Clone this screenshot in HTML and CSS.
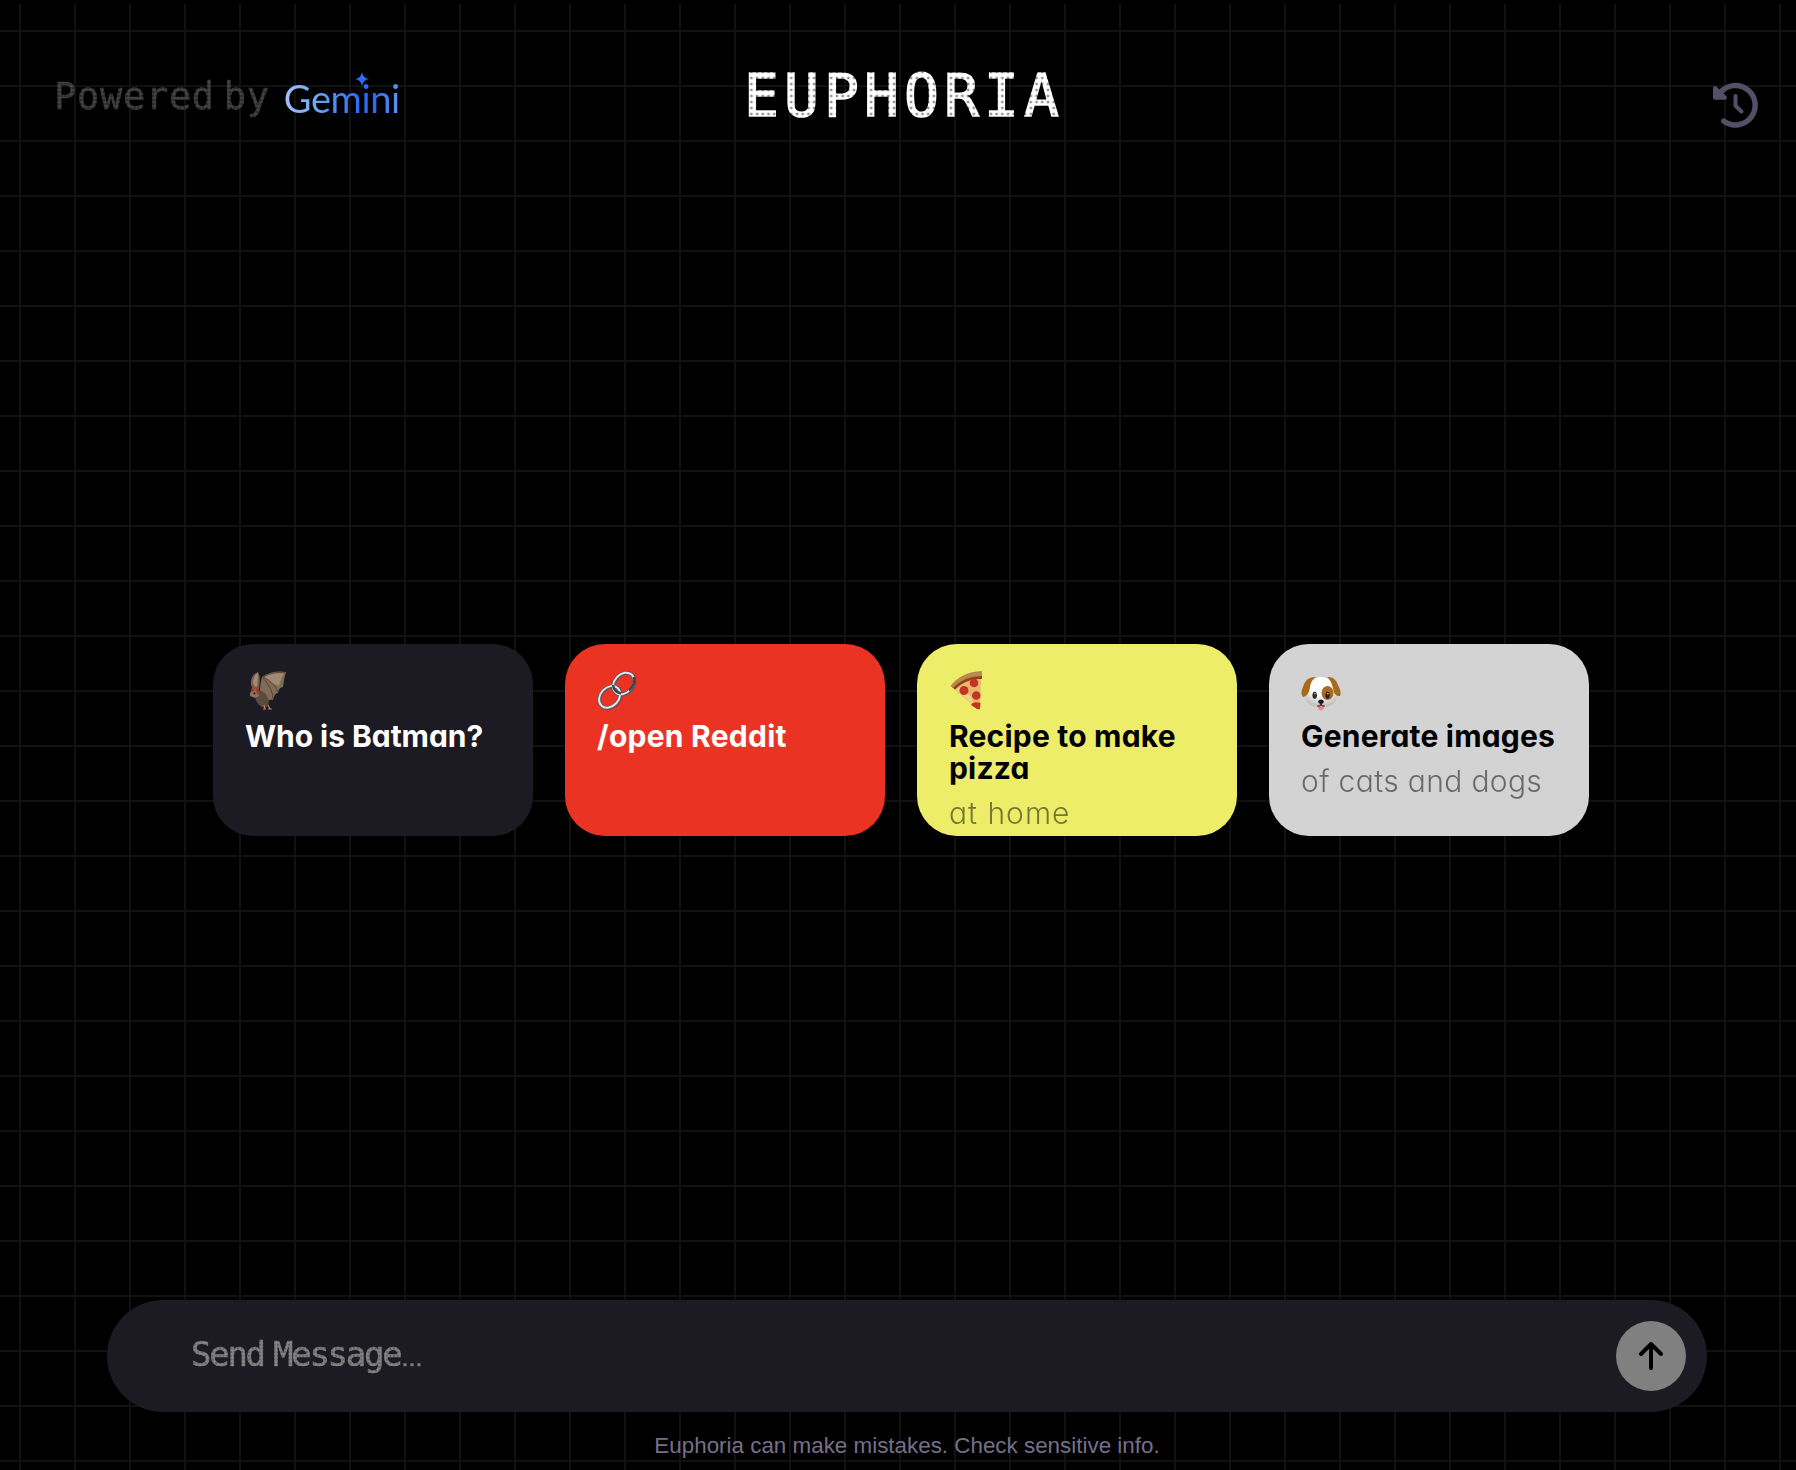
FILE: index.html
```html
<!DOCTYPE html>
<html lang="en">
<head>
<meta charset="utf-8">
<title>Euphoria</title>
<link rel="stylesheet" href="styles.css">
</head>
<body>
<div class="app">
  <header class="header">
    <div class="powered">
      <span class="powered-text">Powered by</span>
      <span class="gemini"><span class="gemini-word">Gemini</span><svg class="spark" viewBox="0 0 14 14"><path fill="#2f6bf2" d="M7 0Q8 6 14 7Q8 8 7 14Q6 8 0 7Q6 6 7 0Z"/></svg></span>
    </div>
    <h1 class="brand">EUPHORIA</h1>
    <button class="history" aria-label="History">
      <svg width="50" height="50" viewBox="0 0 50 50" fill="none" stroke="#534f66" stroke-linecap="round" stroke-linejoin="round">
        <path d="M13.7 41A19.7 19.7 0 1 0 10 13" stroke-width="5.4"/>
        <path d="M5 8V17.7H15Z" fill="#534f66" stroke-width="4"/>
        <path d="M25.5 16V25.7L31.5 31.5" stroke-width="4"/>
      </svg>
    </button>
  </header>

  <main class="cards">
    <article class="card card-dark">
      <svg class="emoji" viewBox="0 0 40 40">
        <path fill="#77614f" d="M6 14Q5 4 13 1Q16 6 14 18L10 22Z"/>
        <path fill="#a48a70" d="M8 13Q8 5 13 2Q13 8 12 17Z"/>
        <path fill="#806b57" d="M17 6Q28-1 41 1Q39 7 38 16Q34 16 33 22Q30 21 28 29Q24 28 18 33Q12 27 17 6Z"/>
        <path fill="#a08972" d="M18 6Q28 0 40 2Q36 6 34 15Q28 13 18 6Z"/>
        <path fill="none" stroke="#55402f" stroke-width=".9" d="M18 6Q29 11 33 21M18 7Q28 18 28 28M18 6Q29 0 40 2"/>
        <ellipse cx="17" cy="28" rx="6" ry="9" transform="rotate(-28 17 28)" fill="#5c4b3c"/>
        <path fill="#8d7057" d="M5 22Q8 16 13 20L14 25L10 27L5 25Z"/>
        <path fill="#a33d27" d="M6 21L7 15L10 20ZM11 20L12 14Q16 18 12 23Z"/>
        <circle cx="9.5" cy="22.5" r=".9" fill="#171210"/>
        <path fill="none" stroke="#b47f70" stroke-width="1.2" d="M19 34L20 38M18 38H21M23 34L25 38M23 38H27"/>
      </svg>
      <h2 class="title t-batman">Who is Batman?</h2>
    </article>
    <article class="card card-red">
      <svg class="emoji" viewBox="0 0 40 40" fill="none">
        <g stroke="#50565e" stroke-width="3.8">
          <ellipse cx="27" cy="12.8" rx="12" ry="9.2" transform="rotate(-48 27 12.8)"/>
          <ellipse cx="13" cy="26.2" rx="12" ry="9.2" transform="rotate(-48 13 26.2)"/>
        </g>
        <g stroke="#dfe5ea" stroke-width="2">
          <ellipse cx="26.6" cy="12.5" rx="12" ry="9.2" transform="rotate(-48 26.6 12.5)"/>
          <ellipse cx="12.6" cy="25.8" rx="12" ry="9.2" transform="rotate(-48 12.6 25.8)"/>
        </g>
        <path stroke="#3f4449" stroke-width="2.4" d="M37 6Q39 13 32 19.500M16 14Q17 21 24 22.500"/>
      </svg>
      <h2 class="title t-reddit">/open Reddit</h2>
    </article>
    <article class="card card-yellow">
      <svg class="emoji" viewBox="0 0 40 40">
        <path fill="#e9b86e" d="M5 18Q16 6 32 6L31 38Q29 40 25 35Z"/>
        <path fill="#f3d28c" d="M7 18Q10 22 25 34L22 26L12 16Z"/>
        <path fill="#8d431e" d="M3 16Q14 3 33 3V8Q17 7 6 18.500Z"/>
        <path fill="#b98a4b" d="M1.500 15Q12 1 33 0V5Q15 5 4 17Z"/>
        <g fill="#c53425"><circle cx="25" cy="12" r="4.300"/><circle cx="15" cy="19.500" r="4.500"/><circle cx="27.300" cy="24.500" r="4.300"/><path d="M22 34Q24 30 31.500 32L31 38Q29 39 25 36Z"/></g>
      </svg>
      <h2 class="title t-pizza">Recipe to make pizza</h2>
      <p class="sub s-home">at home</p>
    </article>
    <article class="card card-gray">
      <svg class="emoji" viewBox="0 0 40 40">
        <defs><radialGradient id="fur" cx=".5" cy=".3" r=".75"><stop offset=".4" stop-color="#fff"/><stop offset="1" stop-color="#b8b5b1"/></radialGradient></defs>
        <path fill="url(#fur)" d="M20 6Q31 6 33 17Q35 22 36 26Q34 35 24 36H16Q6 35 4 27Q4 22 7 17Q9 6 20 6Z"/>
        <path fill="#a86a1e" d="M15 6Q5 5 2 16Q-1 22 2 26Q8 25 9 16Q10 9 15 6ZM26 6Q34 5 37 14Q41 21 39 25Q33 26 32 17Q30 9 26 6Z"/>
        <ellipse cx="26.500" cy="22" rx="6" ry="7" fill="#a96a21"/>
        <ellipse cx="13.700" cy="24.300" rx="2.200" ry="3.500" fill="#262523"/>
        <ellipse cx="26.600" cy="24.300" rx="2.200" ry="3.500" fill="#262523"/>
        <circle cx="14" cy="22.800" r=".7" fill="#fff"/><circle cx="26.900" cy="22.800" r=".7" fill="#fff"/>
        <path fill="#e98495" d="M17 34Q20 32 23 34V37Q20 42 17 37Z"/>
        <path fill="#191919" d="M17 30Q20 27 23 30Q23 32 20 33.500Q17 32 17 30Z"/>
        <path fill="none" stroke="#333" d="M20 32V34M16 35Q20 36 20 33Q20 36 24 35"/>
      </svg>
      <h2 class="title t-images">Generate images</h2>
      <p class="sub s-cats">of cats and dogs</p>
    </article>
  </main>

  <footer class="footer">
    <div class="composer">
      <div class="message">Send Message<span class="dots">...</span></div>
      <button class="send" aria-label="Send">
        <svg width="30" height="34" viewBox="0 0 30 34" fill="none" stroke="#000" stroke-width="4" stroke-linecap="round" stroke-linejoin="round"><path d="M15 29V5M5 15L15 5L25 15"/></svg>
      </button>
    </div>
    <p class="note">Euphoria can make mistakes. Check sensitive info.</p>
  </footer>
</div>
</body>
</html>
```
FILE: styles.css
```css
* { box-sizing: border-box; }
body { margin: 0; display: flow-root; background: #000; font-family: Inter, "Noto Sans", sans-serif; }
h1, h2, p { margin: 0; }
button { border: 0; padding: 0; background: none; }

.app {
  height: 1466px;
  margin-top: 4px;
  display: flex;
  flex-direction: column;
  background-image:
    linear-gradient(#111 2px, transparent 2px),
    linear-gradient(90deg, #111 2px, transparent 2px);
  background-size: 55px 55px;
  background-position: 0 26px, 19px 0;
}

.header {
  height: 186px;
  padding: 56px 36px 0 54px;
  display: grid;
  grid-template-columns: 1fr 334px 1fr;
  align-items: start;
}
.powered { display: flex; align-items: flex-start; gap: 14px; }
.powered-text, .brand, .message {
  font-family: "DejaVu Sans Mono", monospace;
  font-weight: 400;
  white-space: nowrap;
  color: transparent;
  background-clip: text;
  -webkit-background-clip: text;
}
.powered-text {
  font-size: 37px;
  line-height: 48px;
  padding-top: 13px;
  height: 72px;
  letter-spacing: .7px;
  word-spacing: -14px;
  -webkit-text-stroke: .6px transparent;
  background-image: radial-gradient(circle, #444 1.4px, #1c1c1c 2.4px);
  background-size: 3.83px 4px;
}
.gemini { position: relative; padding-top: 14px; }
.gemini-word {
  display: block;
  font: 400 38px/48px Lato, sans-serif;
  letter-spacing: -.4px;
  color: transparent;
  background: linear-gradient(90deg, #a5bff8 0, #6ca8f5 28%, #4b8bf2 45%, #2f6bf2 65%, #2f6bf2 80%, #6097f4);
  background-clip: text;
  -webkit-background-clip: text;
}
.spark { position: absolute; left: 71px; top: 12px; width: 14px; height: 14px; }
.brand {
  padding: 1px 0 0 4px;
  font-size: 58px;
  line-height: 70px;
  letter-spacing: 5.08px;
  -webkit-text-stroke: 1.6px transparent;
  background-image: radial-gradient(circle, #fff 2.6px, #444 4.1px);
  background-size: 5.714px 6px;
}
.history { justify-self: end; width: 50px; height: 50px; margin-top: 20px; }
.history svg { display: block; }

.cards {
  display: grid;
  grid-template-columns: repeat(4, 320px);
  gap: 32px;
  margin: 454px 0 0 213px;
}
.card {
  height: 192px;
  border-radius: 40px;
  padding: 27px 16px 0 32px;
  overflow: hidden;
}
.card-dark { background: #1c1a23; color: #fff; }
.card-red { background: #eb3324; color: #fff; }
.card-yellow { background: #eded69; color: #000; }
.card-gray { background: #d3d3d3; color: #000; }
.emoji { display: block; width: 40px; height: 40px; margin-bottom: 9px; overflow: visible; }
.title, .sub { font-size: 30px; line-height: 32px; font-feature-settings: "cv11"; }
.title { font-weight: 700; }
.sub { font-weight: 350; margin-top: 13px; opacity: .5; }
.t-batman { letter-spacing: -.05px; }
.t-reddit { letter-spacing: .25px; }
.t-pizza { letter-spacing: .2px; }
.t-images { letter-spacing: .2px; }
.s-home { letter-spacing: 1px; }
.s-cats { letter-spacing: .35px; }

.footer { margin-top: auto; padding: 0 89px 0 107px; height: 170px; }
.composer {
  height: 112px;
  border-radius: 56px;
  background: #1c1a23;
  display: flex;
  align-items: center;
  justify-content: space-between;
  padding: 0 21px 0 84px;
}
.message {
  padding-right: 24px;
  margin-bottom: 4px;
  font-size: 34px;
  line-height: 48px;
  letter-spacing: -2.27px;
  word-spacing: -9px;
  -webkit-text-stroke: .6px transparent;
  background-image: radial-gradient(circle, #858585 1.4px, #444349 2.4px);
  background-size: 3.64px 3.7px;
}
.dots { font: 22px "DejaVu Sans", sans-serif; letter-spacing: 0; margin-left: 1px; }
.send {
  width: 70px;
  height: 70px;
  border-radius: 50%;
  background: #808080;
  display: flex;
  align-items: center;
  justify-content: center;
}
.note {
  margin-top: 21px;
  text-align: center;
  font: 22.4px/26px "Liberation Sans", Arial, sans-serif;
  color: #75708a;
}
```
